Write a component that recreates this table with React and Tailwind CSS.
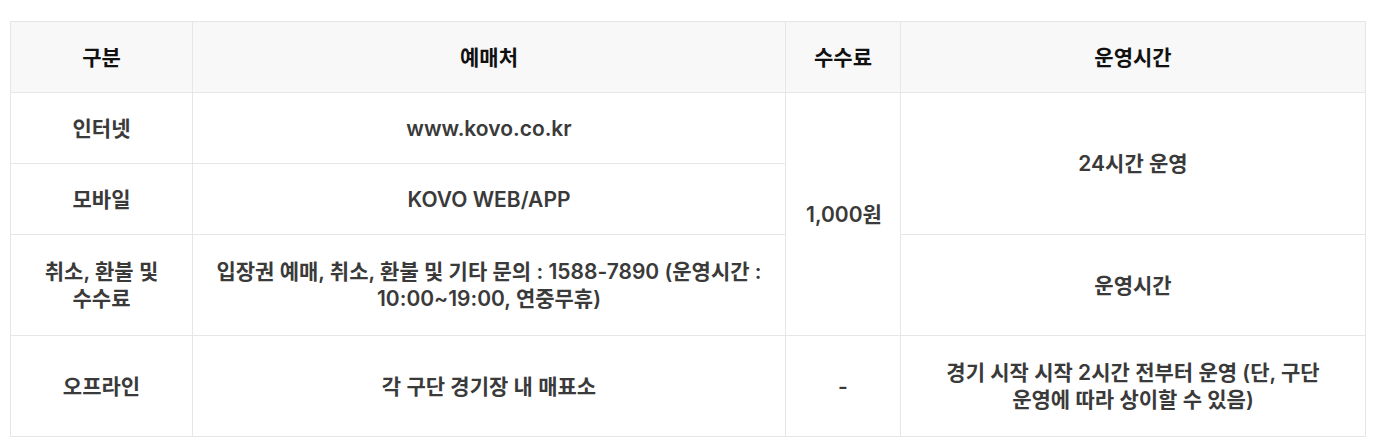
import React from "react";

const cell = "border border-[#e6e6e6] px-5 text-center align-middle break-keep";

export default function App() {
  return (
    <div
      className="min-h-screen bg-white pt-[21px] pl-[10px] pr-[11px]"
      style={{ fontFamily: 'Inter, "Noto Sans CJK KR", sans-serif' }}
    >
      <table className="w-[1355px] table-fixed border-collapse text-[21px] leading-[27px] text-[#3a3a3a]">
        <colgroup>
          <col className="w-[182px]" />
          <col className="w-[593px]" />
          <col className="w-[115px]" />
          <col className="w-[465px]" />
        </colgroup>
        <thead>
          {/* Header */}
          <tr className="h-[71px] bg-[#f8f8f8] text-[#111]">
            <th className={`${cell} font-bold`}>구분</th>
            <th className={`${cell} font-bold`}>예매처</th>
            <th className={`${cell} font-bold`}>수수료</th>
            <th className={`${cell} font-bold`}>운영시간</th>
          </tr>
        </thead>
        <tbody className="font-semibold">
          <tr className="h-[71px]">
            <td className={cell}>인터넷</td>
            <td className={cell}>www.kovo.co.kr</td>
            <td className={cell} rowSpan={3}>
              1,000원
            </td>
            <td className={cell} rowSpan={2}>
              24시간 운영
            </td>
          </tr>
          <tr className="h-[71px]">
            <td className={cell}>모바일</td>
            <td className={cell}>KOVO WEB/APP</td>
          </tr>
          <tr className="h-[101px]">
            <td className={cell}>취소, 환불 및 수수료</td>
            <td className={cell}>
              입장권 예매, 취소, 환불 및 기타 문의 : 1588-7890 (운영시간 : 10:00~19:00, 연중무휴)
            </td>
            <td className={cell}>운영시간</td>
          </tr>
          <tr className="h-[101px]">
            <td className={cell}>오프라인</td>
            <td className={cell}>각 구단 경기장 내 매표소</td>
            <td className={cell}>-</td>
            <td className={cell}>
              경기 시작 시작 2시간 전부터 운영 (단, 구단 운영에 따라 상이할 수 있음)
            </td>
          </tr>
        </tbody>
      </table>
    </div>
  );
}
